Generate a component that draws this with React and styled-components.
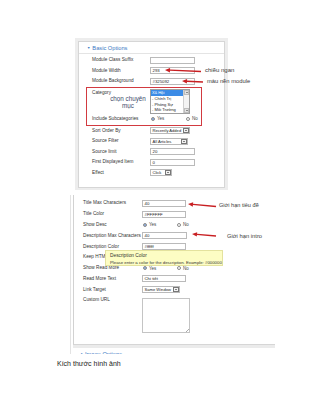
import React from 'react'
import styled, {createGlobalStyle} from 'styled-components'

const GlobalStyle = createGlobalStyle`
html, body {
  margin: 0;
  padding: 0;
  background: #fff;
}
body {
  font-family: "Liberation Sans", Arial, sans-serif;
}
`;

const Page = styled.div`
position: relative;
width: 320px;
height: 414px;
padding-top: 38px;
box-sizing: border-box;
overflow: hidden;
`;

const ShotOne = styled.div`
margin-left: 75px;
width: 153px;
height: 152px;
box-sizing: border-box;
padding: 3px 3px 2px 3px;
background: #ededed;
`;

const PanelOne = styled.div`
height: 100%;
box-sizing: border-box;
background: #fff;
border: 1px solid #d6d6d6;
`;

const PanelHead = styled.div`
height: 11px;
display: flex;
align-items: center;
gap: 2px;
padding-left: ${p => p.$indent}px;
border-bottom: 1px solid #e4e4e4;
color: #3b79c4;
font-size: 5.7px;
white-space: nowrap;
`;

const Tri = styled.span`
font-size: 3.4px;
`;

const Form = styled.div`
padding: ${p => p.$pad};
`;

const Row = styled.div`
display: grid;
grid-template-columns: ${p => p.$label}px 1fr;
height: ${p => p.$h}px;
align-items: ${p => (p.$top ? 'start' : 'center')};
`;

const Label = styled.div`
font-size: 4.7px;
line-height: 6px;
color: #333;
white-space: nowrap;
padding-top: ${p => (p.$top ? p.$top : 0)}px;
`;

const Box = styled.div`
width: ${p => p.$w}px;
height: 7px;
box-sizing: border-box;
border: 1px solid #bababa;
background: #fff;
font-size: 4.3px;
line-height: 5px;
padding-left: 1.5px;
color: #222;
white-space: nowrap;
overflow: hidden;
`;

const SelectBox = styled.div`
width: ${p => p.$w}px;
height: 7px;
box-sizing: border-box;
border: 1px solid #bababa;
background: #fff;
display: flex;
align-items: center;
font-size: 4.1px;
color: #222;
padding-left: 1.5px;
white-space: nowrap;
`;

const SelBtn = styled.span`
margin-left: auto;
margin-right: 0.5px;
width: 6px;
height: 5px;
box-sizing: border-box;
border: 0.8px solid #777;
background: #f2f2f2;
display: flex;
align-items: center;
justify-content: center;
&::after {
  content: '';
  border-left: 1.3px solid transparent;
  border-right: 1.3px solid transparent;
  border-top: 1.5px solid #111;
}
`;

const Radios = styled.div`
display: grid;
grid-template-columns: ${p => p.$gap}px auto;
padding-left: ${p => p.$off}px;
`;

const RadioItem = styled.span`
display: flex;
align-items: center;
gap: 2px;
font-size: 4.5px;
color: #444;
`;

const Dot = styled.span`
width: 4px;
height: 4px;
box-sizing: border-box;
border-radius: 50%;
border: 0.7px solid #8a8a8a;
background: ${p => (p.$on ? 'radial-gradient(circle, #1d5fc2 0 45%, #fff 55%)' : '#fff')};
`;

const RedGroup = styled.div`
position: relative;
margin-left: -6px;
width: 116px;
box-sizing: border-box;
border: 1px solid #d23a40;
padding: 1px 0 1px 5px;
`;

const Hint = styled.div`
position: absolute;
left: 19px;
top: 7px;
width: 44px;
text-align: center;
font-size: 6.3px;
line-height: 7px;
color: #3d4b6b;
`;

const ListBox = styled.div`
width: 40px;
height: 25px;
box-sizing: border-box;
border: 1px solid #9e9e9e;
background: #fff;
display: flex;
`;

const ListItems = styled.div`
flex: 1;
padding-top: 0.5px;
`;

const ListItem = styled.div`
height: 5.8px;
line-height: 5.8px;
font-size: 4.1px;
padding-left: 1px;
white-space: nowrap;
color: ${p => (p.$sel ? '#fff' : '#222')};
background: ${p => (p.$sel ? '#3b8be6' : 'transparent')};
`;

const Scroll = styled.div`
width: 5px;
border-left: 0.6px solid #cfcfcf;
background: #f3f3f3;
display: flex;
flex-direction: column;
justify-content: space-between;
`;

const ScrollBtn = styled.span`
height: 5px;
background: #e2e2e2;
border: 0.5px solid #bdbdbd;
box-sizing: border-box;
display: flex;
align-items: center;
justify-content: center;
&::after {
  content: '';
  border-left: 1.2px solid transparent;
  border-right: 1.2px solid transparent;
  ${p => (p.$up ? 'border-bottom: 1.4px solid #333;' : 'border-top: 1.4px solid #333;')}
}
`;

const ShotTwo = styled.div`
position: relative;
margin: 5px 0 0 70px;
width: 205px;
height: 159px;
box-sizing: border-box;
overflow: hidden;
border-left: 1px solid #e3e3e3;
padding-left: 2px;
background: #fff;
`;

const PanelTwo = styled.div`
height: 150px;
box-sizing: border-box;
border-left: 1px solid #d2d2d2;
border-bottom: 1px solid #d6d6d6;
background: #fff;
`;

const Strip = styled.div`
height: 3px;
background: #ebebeb;
`;

const SubHead = styled.div`
display: flex;
align-items: center;
gap: 2px;
height: 8px;
padding: 2px 0 0 8px;
color: #3b79c4;
font-size: 5.7px;
`;

const TextArea = styled.div`
margin-top: 3px;
width: 48px;
height: 35px;
box-sizing: border-box;
border: 1px solid #c4c4c4;
background: #fff;
position: relative;
&::after {
  content: '';
  position: absolute;
  right: 0.5px;
  bottom: 0.5px;
  width: 3px;
  height: 3px;
  background: linear-gradient(135deg, transparent 45%, #aaa 50%, transparent 55%, transparent 70%, #aaa 75%, transparent 80%);
}
`;

const Tooltip = styled.div`
position: absolute;
left: 34px;
top: 55px;
width: 118px;
height: 16px;
box-sizing: border-box;
background: #fdfdc4;
border: 1px solid #e4e29e;
padding: 1.5px 0 0 4px;
color: #333;
white-space: nowrap;
`;

const TipTitle = styled.div`
font-size: 4.8px;
line-height: 6px;
`;

const TipText = styled.div`
margin-top: 1.5px;
font-size: 4.3px;
line-height: 5px;
`;

const Caption = styled.div`
margin-top: 6px;
padding-left: 57px;
font-size: 7px;
line-height: 8px;
color: #222;
`;

const Overlay = styled.svg`
position: absolute;
left: 0;
top: 0;
pointer-events: none;
`;

const Note = styled.div`
position: absolute;
left: ${p => p.$x}px;
top: ${p => p.$y}px;
font-size: ${p => p.$size}px;
line-height: 7px;
color: #3a3a3a;
white-space: nowrap;
`;

const Arrow = ({x1, y1, x2, y2}) => {
    const a = Math.atan2(y2 - y1, x2 - x1)
    const bx = x1 + Math.cos(a) * 5
    const by = y1 + Math.sin(a) * 5
    const px = -Math.sin(a) * 2.2
    const py = Math.cos(a) * 2.2
    return (
        <g>
            <line x1={bx} y1={by} x2={x2} y2={y2} stroke="#c81f22" strokeWidth="1.3"/>
            <polygon points={`${x1},${y1} ${bx + px},${by + py} ${bx - px},${by - py}`} fill="#c81f22"/>
        </g>
    )
}

const YesNo = ({gap, off}) => (
    <Radios $gap={gap} $off={off}>
        <RadioItem><Dot $on/>Yes</RadioItem>
        <RadioItem><Dot/>No</RadioItem>
    </Radios>
)

const categories = ['Xã Hội', '- Chính Trị', '- Phóng Sự', '- Môi Trường']

const BasicOptions = () => (
    <ShotOne>
        <PanelOne>
            <PanelHead $indent={8}><Tri>▼</Tri>Basic Options</PanelHead>
            <Form $pad="1px 0 0 13px">
                <Row $label={58} $h={10.5}><Label>Module Class Suffix</Label><Box $w={45}/></Row>
                <Row $label={58} $h={10.5}><Label>Module Width</Label><Box $w={45}>293</Box></Row>
                <Row $label={58} $h={10.5}><Label>Module Background</Label><Box $w={45}>#325092</Box></Row>
                <RedGroup>
                    <Row $label={58} $h={25} $top><Label $top={1}>Category</Label>
                        <ListBox>
                            <ListItems>
                                {categories.map((c, i) => <ListItem key={c} $sel={i === 0}>{c}</ListItem>)}
                            </ListItems>
                            <Scroll><ScrollBtn $up/><ScrollBtn/></Scroll>
                        </ListBox>
                    </Row>
                    <Row $label={58} $h={10}><Label>Include Subcategories</Label><YesNo gap={35} off={1}/></Row>
                    <Hint>chọn chuyên<br/>mục</Hint>
                </RedGroup>
                <Row $label={58} $h={10.5}><Label>Sort Order By</Label><SelectBox $w={40}>Recently Added<SelBtn/></SelectBox></Row>
                <Row $label={58} $h={10.5}><Label>Source Filter</Label><SelectBox $w={38}>All Articles<SelBtn/></SelectBox></Row>
                <Row $label={58} $h={10.5}><Label>Source limit</Label><Box $w={45}>20</Box></Row>
                <Row $label={58} $h={10.5}><Label>First Displayed Item</Label><Box $w={45}>0</Box></Row>
                <Row $label={58} $h={10.5}><Label>Effect</Label><SelectBox $w={22}>Click<SelBtn/></SelectBox></Row>
            </Form>
        </PanelOne>
    </ShotOne>
)

const TextOptions = () => (
    <ShotTwo>
        <PanelTwo>
            <Form $pad="3px 0 0 9px">
                <Row $label={59} $h={10.8}><Label>Title Max Characters</Label><Box $w={44}>40</Box></Row>
                <Row $label={59} $h={10.8}><Label>Title Color</Label><Box $w={44}>#FFFFFF</Box></Row>
                <Row $label={59} $h={10.8}><Label>Show Desc</Label><YesNo gap={34} off={1}/></Row>
                <Row $label={59} $h={10.8}><Label>Description Max Characters</Label><Box $w={45}>40</Box></Row>
                <Row $label={59} $h={10.8}><Label>Description Color</Label><Box $w={44}>#ffffff</Box></Row>
                <Row $label={59} $h={10.8}><Label>Keep HTML</Label><Box $w={44}/></Row>
                <Row $label={59} $h={10.8}><Label>Show Read More</Label><YesNo gap={34} off={1}/></Row>
                <Row $label={59} $h={10.8}><Label>Read More Text</Label><Box $w={44}>Chi tiết</Box></Row>
                <Row $label={59} $h={10.8}><Label>Link Target</Label><SelectBox $w={38}>Same Window<SelBtn/></SelectBox></Row>
                <Row $label={59} $h={40} $top><Label $top={2}>Custom URL</Label><TextArea/></Row>
            </Form>
        </PanelTwo>
        <Strip/>
        <SubHead><Tri>▶</Tri>Image Options</SubHead>
        <Tooltip>
            <TipTitle>Description Color</TipTitle>
            <TipText>Please enter a color for the description. Example: #000000</TipText>
        </Tooltip>
    </ShotTwo>
)

const App = () => {
    return (
        <Page>
            <GlobalStyle/>
            <BasicOptions/>
            <TextOptions/>
            <Caption>Kích thước hình ảnh</Caption>
            <Overlay width="320" height="414" viewBox="0 0 320 414">
                <Arrow x1={165} y1={70} x2={201} y2={71.5}/>
                <Arrow x1={182} y1={81} x2={203} y2={82}/>
                <Arrow x1={188} y1={204} x2={216} y2={206.5}/>
                <Arrow x1={192} y1={234} x2={216} y2={236}/>
            </Overlay>
            <Note $x={205} $y={66.5} $size={6}>chiều ngan</Note>
            <Note $x={207} $y={78} $size={5.8}>màu nền module</Note>
            <Note $x={219} $y={201.5} $size={5.6}>Giới hạn tiêu đề</Note>
            <Note $x={227} $y={232.5} $size={5.8}>Giới hạn intro</Note>
        </Page>
    )
}

export default App
